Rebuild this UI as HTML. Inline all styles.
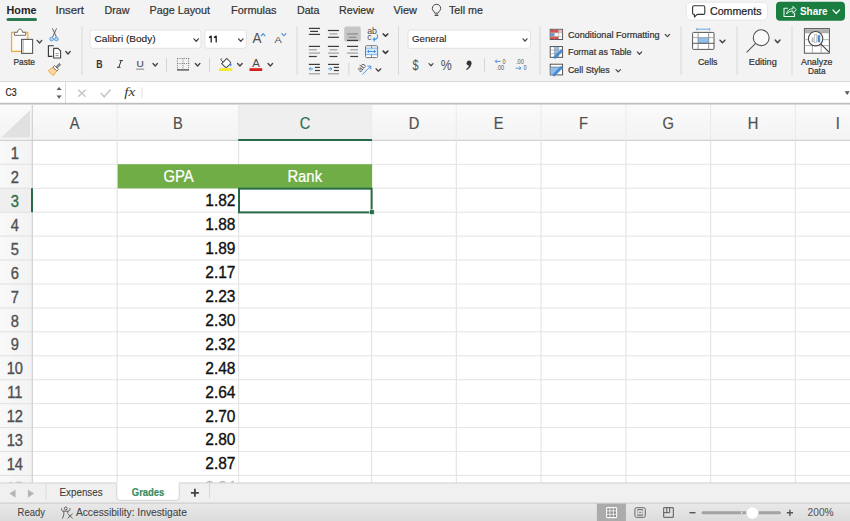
<!DOCTYPE html><html><head><meta charset="utf-8"><style>*{margin:0;padding:0}html,body{width:850px;height:521px;overflow:hidden;background:#fff}svg{display:block}</style></head><body>
<svg width="850" height="521" viewBox="0 0 850 521" font-family='"Liberation Sans",sans-serif'>
<rect x="0" y="0" width="850" height="82" fill="#f3f3f3" />
<rect x="0" y="81" width="850" height="1" fill="#dadada" />
<text x="6.5" y="14" font-size="11" fill="#1f1f1f" font-weight="bold" text-anchor="start" textLength="30" lengthAdjust="spacingAndGlyphs" >Home</text>
<text x="55.5" y="14" font-size="11" fill="#333" font-weight="normal" text-anchor="start" textLength="28.5" lengthAdjust="spacingAndGlyphs" stroke="#333" stroke-width="0.22" >Insert</text>
<text x="104.5" y="14" font-size="11" fill="#333" font-weight="normal" text-anchor="start" textLength="25" lengthAdjust="spacingAndGlyphs" stroke="#333" stroke-width="0.22" >Draw</text>
<text x="149.5" y="14" font-size="11" fill="#333" font-weight="normal" text-anchor="start" textLength="60.5" lengthAdjust="spacingAndGlyphs" stroke="#333" stroke-width="0.22" >Page Layout</text>
<text x="231" y="14" font-size="11" fill="#333" font-weight="normal" text-anchor="start" textLength="45.5" lengthAdjust="spacingAndGlyphs" stroke="#333" stroke-width="0.22" >Formulas</text>
<text x="297" y="14" font-size="11" fill="#333" font-weight="normal" text-anchor="start" textLength="22.5" lengthAdjust="spacingAndGlyphs" stroke="#333" stroke-width="0.22" >Data</text>
<text x="339" y="14" font-size="11" fill="#333" font-weight="normal" text-anchor="start" textLength="35" lengthAdjust="spacingAndGlyphs" stroke="#333" stroke-width="0.22" >Review</text>
<text x="393.5" y="14" font-size="11" fill="#333" font-weight="normal" text-anchor="start" textLength="23.5" lengthAdjust="spacingAndGlyphs" stroke="#333" stroke-width="0.22" >View</text>
<text x="449" y="14" font-size="11" fill="#333" font-weight="normal" text-anchor="start" textLength="34" lengthAdjust="spacingAndGlyphs" stroke="#333" stroke-width="0.22" >Tell me</text>
<rect x="6.5" y="18" width="30.5" height="3" rx="1.5" fill="#2c7a53"/>
<path d="M434.9 13.2c-.3-1.6-2.6-2.6-2.6-4.7a4.2 4.2 0 0 1 8.4 0c0 2.1-2.3 3.1-2.6 4.7z" stroke="#4a4a4a" stroke-width="1.0" fill="none" stroke-linejoin="round"/>
<path d="M435.2 15.3h2.6" stroke="#4a4a4a" stroke-width="1.4" fill="none" stroke-linecap="round"/>
<rect x="686.3" y="2.3" width="81.2" height="17.8" rx="4.5" fill="#fff" stroke="#e2e2e2" stroke-width="0.8"/>
<path d="M694 5.8h9.4a1.4 1.4 0 0 1 1.4 1.4v5.8a1.4 1.4 0 0 1-1.4 1.4h-6.2l-2.8 2.6v-2.6h-.4a1.4 1.4 0 0 1-1.4-1.4v-5.8a1.4 1.4 0 0 1 1.4-1.4z" stroke="#333" stroke-width="1.1" fill="none" stroke-linejoin="round"/>
<text x="710" y="15.2" font-size="10.5" fill="#222" font-weight="normal" text-anchor="start" textLength="51.5" lengthAdjust="spacingAndGlyphs" stroke="#222" stroke-width="0.22" >Comments</text>
<rect x="776" y="1.8" width="69" height="19" rx="4" fill="#1b7e41"/>
<path d="M788 8.2h-4v8.3h10.5v-3.5" stroke="#e8f5ec" stroke-width="1.1" fill="none" stroke-linejoin="round"/>
<path d="M786.5 14c.5-3.5 3-5.3 6.5-5.3v-2.4l3.3 3.5-3.3 3.5v-2.3c-2.8 0-5 .9-6.5 3z" stroke="#e8f5ec" stroke-width="1.0" fill="none" stroke-linejoin="round"/>
<text x="800" y="15" font-size="10.5" fill="#fff" font-weight="bold" text-anchor="start" textLength="27.5" lengthAdjust="spacingAndGlyphs" >Share</text>
<path d="M833.00 10.00L836.25 13.50L839.50 10.00" stroke="#e8f5ec" stroke-width="1.32" fill="none" stroke-linecap="round" stroke-linejoin="round"/>
<rect x="11.5" y="32.3" width="16.3" height="19.2" fill="#fdeccf" stroke="#f2a640" stroke-width="1.1"/>
<rect x="13.2" y="34.2" width="13" height="15.6" fill="#fbfbfb"/>
<path d="M14.4 35.3v-3h3.2c0-2 1-3.2 2.4-3.2s2.4 1.2 2.4 3.2h3.2v3z" stroke="#707070" stroke-width="1.0" fill="#fff" stroke-linejoin="round"/>
<rect x="21.6" y="39.4" width="11" height="14" fill="#fff" stroke="#5a5a5a" stroke-width="1.1"/>
<rect x="22.2" y="40" width="1.8" height="12.8" fill="#c8c8c8"/>
<path d="M37.20 40.35L39.50 42.95L41.80 40.35" stroke="#444" stroke-width="1.32" fill="none" stroke-linecap="round" stroke-linejoin="round"/>
<text x="13.5" y="65" font-size="9" fill="#333" font-weight="normal" text-anchor="start" textLength="21.5" lengthAdjust="spacingAndGlyphs" stroke="#333" stroke-width="0.22" >Paste</text>
<path d="M52.4 28.4l4 8.6M56.6 28.4l-4 8.6" stroke="#555" stroke-width="0.9" fill="none" />
<circle cx="51.6" cy="39.1" r="1.8" fill="#b9d6f2" stroke="#5d9fdc" stroke-width="1.0"/>
<circle cx="56.4" cy="39.1" r="1.8" fill="#b9d6f2" stroke="#5d9fdc" stroke-width="1.0"/>
<path d="M53.8 45.8h-5.4v10.6h4" stroke="#333" stroke-width="1.1" fill="none" />
<path d="M53.6 48.4h4.4l2.6 2.6v7h-7z" stroke="#444" stroke-width="1.1" fill="#fff" stroke-linejoin="round"/>
<path d="M55.6 53.6h3M55.6 55.6h3" stroke="#777" stroke-width="0.8" fill="none" />
<path d="M65.80 51.55L68.00 53.95L70.20 51.55" stroke="#444" stroke-width="1.32" fill="none" stroke-linecap="round" stroke-linejoin="round"/>
<g transform="translate(55.6,68.4) rotate(45) scale(0.82)"><path d="M-3.2 1.2h6.4l1.2 6.8c-2.5 1-6.3 1-8.8 0z" fill="#fbd6a0" stroke="#f0a43a" stroke-width="1" stroke-linejoin="round"/><rect x="-3.4" y="-1.6" width="6.8" height="2.8" fill="#fff" stroke="#555" stroke-width="0.9"/><rect x="-1.1" y="-7.6" width="2.2" height="6" fill="#999" stroke="#555" stroke-width="0.8"/></g>
<rect x="81.5" y="26" width="1" height="49" fill="#dadada" />
<rect x="90" y="30" width="111" height="18.3" rx="2.5" fill="#fff" stroke="#dcdcdc" stroke-width="0.8"/>
<text x="94.6" y="42.4" font-size="9.5" fill="#1a1a1a" font-weight="normal" text-anchor="start" textLength="61" lengthAdjust="spacingAndGlyphs" stroke="#1a1a1a" stroke-width="0.1">Calibri (Body)</text>
<path d="M194.00 38.85L196.20 41.35L198.40 38.85" stroke="#444" stroke-width="1.32" fill="none" stroke-linecap="round" stroke-linejoin="round"/>
<rect x="204.8" y="30" width="41.5" height="18.3" rx="2.5" fill="#fff" stroke="#dcdcdc" stroke-width="0.8"/>
<path d="M211.2 42.6v-6.5l-2.2 1.5M216.2 42.6v-6.5l-2.2 1.5" stroke="#222" stroke-width="1.3" fill="none" stroke-linejoin="round"/>
<path d="M238.60 38.85L240.80 41.35L243.00 38.85" stroke="#444" stroke-width="1.32" fill="none" stroke-linecap="round" stroke-linejoin="round"/>
<text x="252.4" y="43.2" font-size="14" fill="#505050" font-weight="normal" text-anchor="start" textLength="9" lengthAdjust="spacingAndGlyphs" stroke="none">A</text>
<path d="M261.20 35.80L263.10 33.60L265.00 35.80" stroke="#3f8bd6" stroke-width="1.08" fill="none" stroke-linecap="round" stroke-linejoin="round"/>
<text x="274.6" y="42.9" font-size="9.8" fill="#505050" font-weight="normal" text-anchor="start" textLength="7.2" lengthAdjust="spacingAndGlyphs" stroke="none">A</text>
<path d="M281.80 33.55L283.80 35.75L285.80 33.55" stroke="#3f8bd6" stroke-width="1.08" fill="none" stroke-linecap="round" stroke-linejoin="round"/>
<rect x="296.5" y="26" width="1" height="49" fill="#dadada" />
<text x="96.3" y="67.6" font-size="10" fill="#333" font-weight="bold" text-anchor="start" textLength="6.3" lengthAdjust="spacingAndGlyphs" >B</text>
<path d="M119.5 60.6h3.4M117.1 67.3h3.4M121.2 60.6l-2.4 6.7" stroke="#333" stroke-width="1.0" fill="none" />
<text x="136.6" y="66.6" font-size="9.5" fill="#555" font-weight="normal" text-anchor="start" textLength="7.3" lengthAdjust="spacingAndGlyphs" stroke="#555" stroke-width="0.22" >U</text>
<rect x="136.2" y="68.6" width="8" height="1.1" fill="#8a8a8a" />
<path d="M153.00 63.55L155.20 66.05L157.40 63.55" stroke="#444" stroke-width="1.32" fill="none" stroke-linecap="round" stroke-linejoin="round"/>
<rect x="166" y="58" width="1" height="13.5" fill="#d4d4d4" />
<rect x="176.95000000000002" y="58.4" width="0.9" height="1.1" fill="#777" />
<rect x="176.95000000000002" y="60.6" width="0.9" height="1.1" fill="#777" />
<rect x="176.95000000000002" y="62.8" width="0.9" height="1.1" fill="#777" />
<rect x="176.95000000000002" y="65.0" width="0.9" height="1.1" fill="#777" />
<rect x="176.95000000000002" y="67.2" width="0.9" height="1.1" fill="#777" />
<rect x="182.55" y="58.4" width="0.9" height="1.1" fill="#777" />
<rect x="182.55" y="60.6" width="0.9" height="1.1" fill="#777" />
<rect x="182.55" y="62.8" width="0.9" height="1.1" fill="#777" />
<rect x="182.55" y="65.0" width="0.9" height="1.1" fill="#777" />
<rect x="182.55" y="67.2" width="0.9" height="1.1" fill="#777" />
<rect x="188.15" y="58.4" width="0.9" height="1.1" fill="#777" />
<rect x="188.15" y="60.6" width="0.9" height="1.1" fill="#777" />
<rect x="188.15" y="62.8" width="0.9" height="1.1" fill="#777" />
<rect x="188.15" y="65.0" width="0.9" height="1.1" fill="#777" />
<rect x="188.15" y="67.2" width="0.9" height="1.1" fill="#777" />
<rect x="177.2" y="57.949999999999996" width="1.1" height="0.9" fill="#777" />
<rect x="179.39999999999998" y="57.949999999999996" width="1.1" height="0.9" fill="#777" />
<rect x="181.6" y="57.949999999999996" width="1.1" height="0.9" fill="#777" />
<rect x="183.79999999999998" y="57.949999999999996" width="1.1" height="0.9" fill="#777" />
<rect x="186.0" y="57.949999999999996" width="1.1" height="0.9" fill="#777" />
<rect x="188.2" y="57.949999999999996" width="1.1" height="0.9" fill="#777" />
<rect x="177.2" y="63.15" width="1.1" height="0.9" fill="#777" />
<rect x="179.39999999999998" y="63.15" width="1.1" height="0.9" fill="#777" />
<rect x="181.6" y="63.15" width="1.1" height="0.9" fill="#777" />
<rect x="183.79999999999998" y="63.15" width="1.1" height="0.9" fill="#777" />
<rect x="186.0" y="63.15" width="1.1" height="0.9" fill="#777" />
<rect x="188.2" y="63.15" width="1.1" height="0.9" fill="#777" />
<rect x="177" y="69.2" width="12" height="1.4" fill="#555" />
<path d="M195.30 63.55L197.60 66.05L199.90 63.55" stroke="#444" stroke-width="1.32" fill="none" stroke-linecap="round" stroke-linejoin="round"/>
<rect x="209" y="58" width="1" height="13.5" fill="#d4d4d4" />
<g transform="translate(225.8,62.6) rotate(-45)"><path d="M-3.6 -2.2h7.2v4.6c0 1-.6 1.6-1.6 1.6h-4c-1 0-1.6-.6-1.6-1.6z" fill="#fff" stroke="#444" stroke-width="1"/><path d="M-1.6 -2.2v-2.8c0-1 1.5-1.2 1.6-0.2" fill="none" stroke="#444" stroke-width="0.9"/></g>
<path d="M230.6 63.2c.9 1.2 1.1 2.2.1 2.6-.9.3-1.4-.6-.1-2.6z" stroke="#3f8bd6" stroke-width="0.5" fill="#3f8bd6" />
<rect x="219" y="68.2" width="13.2" height="2.8" fill="#f7e92c" />
<path d="M237.60 63.55L239.90 66.05L242.20 63.55" stroke="#444" stroke-width="1.32" fill="none" stroke-linecap="round" stroke-linejoin="round"/>
<text x="252.3" y="66.8" font-size="11" fill="#4a4a4a" font-weight="normal" text-anchor="start" textLength="7.6" lengthAdjust="spacingAndGlyphs" stroke="none">A</text>
<rect x="249.5" y="68.2" width="12.7" height="2.8" fill="#d9201f" />
<path d="M268.00 63.55L270.30 66.05L272.60 63.55" stroke="#444" stroke-width="1.32" fill="none" stroke-linecap="round" stroke-linejoin="round"/>
<rect x="308.9" y="27.799999999999997" width="11.1" height="1.2" fill="#3c3c3c" />
<rect x="310.1" y="30.799999999999997" width="7.9" height="1.2" fill="#3c3c3c" />
<rect x="308.9" y="33.8" width="11.1" height="1.2" fill="#3c3c3c" />
<rect x="327.9" y="29.9" width="11" height="1.2" fill="#3c3c3c" />
<rect x="329.4" y="33.3" width="8.1" height="1.2" fill="#a0a0a0" />
<rect x="327.9" y="36.699999999999996" width="11" height="1.2" fill="#3c3c3c" />
<rect x="344.2" y="26.5" width="16.6" height="15.1" rx="2.2" fill="#c6c6c6"/>
<rect x="347" y="33.3" width="11" height="1.2" fill="#8a8a8a" />
<rect x="348.5" y="36.699999999999996" width="8" height="1.2" fill="#8a8a8a" />
<rect x="347" y="39.8" width="11" height="1.2" fill="#3c3c3c" />
<text x="367.2" y="33.8" font-size="8.4" fill="#4a4a4a" font-weight="normal" text-anchor="start" textLength="9.8" lengthAdjust="spacingAndGlyphs" stroke="none">ab</text>
<text x="367.2" y="39.7" font-size="8.4" fill="#4a4a4a" font-weight="normal" text-anchor="start" textLength="4.4" lengthAdjust="spacingAndGlyphs" stroke="none">c</text>
<path d="M377.2 34.8c.8 1.6.6 4-2.2 4.6h-1.6M374.6 37.9l-1.5 1.5 1.5 1.5" stroke="#4a98dc" stroke-width="1.1" fill="none" stroke-linejoin="round" stroke-linecap="round"/>
<path d="M383.20 33.95L385.50 36.15L387.80 33.95" stroke="#3a3a3a" stroke-width="1.56" fill="none" stroke-linecap="round" stroke-linejoin="round"/>
<rect x="308.9" y="45.8" width="11.1" height="1.2" fill="#3c3c3c" />
<rect x="308.9" y="49.199999999999996" width="7.9" height="1.2" fill="#a0a0a0" />
<rect x="308.9" y="52.5" width="11.1" height="1.2" fill="#a0a0a0" />
<rect x="308.9" y="55.9" width="7.9" height="1.2" fill="#3c3c3c" />
<rect x="327.9" y="45.8" width="11.1" height="1.2" fill="#3c3c3c" />
<rect x="329.5" y="49.199999999999996" width="7.9" height="1.2" fill="#a0a0a0" />
<rect x="327.9" y="52.5" width="11.1" height="1.2" fill="#a0a0a0" />
<rect x="329.5" y="55.9" width="7.9" height="1.2" fill="#3c3c3c" />
<rect x="347" y="45.8" width="11.1" height="1.2" fill="#3c3c3c" />
<rect x="350.2" y="49.199999999999996" width="7.9" height="1.2" fill="#a0a0a0" />
<rect x="347" y="52.5" width="11.1" height="1.2" fill="#a0a0a0" />
<rect x="350.2" y="55.9" width="7.9" height="1.2" fill="#3c3c3c" />
<rect x="365.5" y="45.7" width="12.1" height="11.9" rx="1.2" fill="#fff" stroke="#777" stroke-width="1"/>
<rect x="366" y="48.2" width="11.1" height="6.4" fill="#d3ebfb" />
<path d="M365.5 48.1h12.1M365.5 54.7h12.1" stroke="#5aa0dc" stroke-width="0.8" fill="none" />
<path d="M371.55 45.7v2.4M371.55 54.7v2.9" stroke="#777" stroke-width="0.8" fill="none" />
<path d="M367.6 51.5h7.9M369 50.1l-1.4 1.4 1.4 1.4M374.1 50.1l1.4 1.4-1.4 1.4" stroke="#3f8bd6" stroke-width="0.9" fill="none" />
<path d="M383.20 51.15L385.50 53.35L387.80 51.15" stroke="#3a3a3a" stroke-width="1.56" fill="none" stroke-linecap="round" stroke-linejoin="round"/>
<rect x="308.8" y="63.800000000000004" width="11.1" height="1.2" fill="#3c3c3c" />
<rect x="314.9" y="66.80000000000001" width="5" height="1.2" fill="#3c3c3c" />
<rect x="314.9" y="69.9" width="5" height="1.2" fill="#3c3c3c" />
<rect x="308.8" y="73.2" width="11.1" height="1.2" fill="#a0a0a0" />
<path d="M313 68.9h-3.6M310.9 67.3l-1.6 1.6 1.6 1.6" stroke="#3f8bd6" stroke-width="0.9" fill="none" />
<rect x="328" y="63.800000000000004" width="11" height="1.2" fill="#3c3c3c" />
<rect x="333.9" y="66.80000000000001" width="5" height="1.2" fill="#3c3c3c" />
<rect x="333.9" y="69.9" width="5" height="1.2" fill="#3c3c3c" />
<rect x="328" y="73.2" width="11" height="1.2" fill="#a0a0a0" />
<path d="M328.2 68.9h3.6M330.3 67.3l1.6 1.6-1.6 1.6" stroke="#3f8bd6" stroke-width="0.9" fill="none" />
<rect x="348.4" y="62.7" width="1" height="12.7" fill="#d4d4d4" />
<text x="0" y="0" font-size="7.8" fill="#444" transform="translate(360.6,72.6) rotate(-50)" textLength="9" lengthAdjust="spacingAndGlyphs">ab</text>
<path d="M362.4 74.5l8.3-8.3M367.4 66.1h3.4v3.4" stroke="#3f8bd6" stroke-width="0.9" fill="none" />
<path d="M376.00 68.85L378.40 71.15L380.80 68.85" stroke="#444" stroke-width="1.32" fill="none" stroke-linecap="round" stroke-linejoin="round"/>
<rect x="398" y="26" width="1" height="49" fill="#dadada" />
<rect x="408" y="30" width="122.5" height="18.3" rx="2.5" fill="#fff" stroke="#dcdcdc" stroke-width="0.8"/>
<text x="412" y="42.2" font-size="9.5" fill="#1a1a1a" font-weight="normal" text-anchor="start" textLength="34.5" lengthAdjust="spacingAndGlyphs" stroke="#1a1a1a" stroke-width="0.1">General</text>
<path d="M523.00 38.85L525.00 41.15L527.00 38.85" stroke="#444" stroke-width="1.32" fill="none" stroke-linecap="round" stroke-linejoin="round"/>
<text transform="translate(412.40,69.60) scale(0.78,1.0)" font-size="14" fill="#505050" font-weight="normal" text-anchor="start" >$</text>
<path d="M429.00 63.65L431.00 65.75L433.00 63.65" stroke="#444" stroke-width="1.2" fill="none" stroke-linecap="round" stroke-linejoin="round"/>
<text transform="translate(440.80,69.80) scale(0.9,1.0)" font-size="13.8" fill="#555" font-weight="normal" text-anchor="start" >%</text>
<path d="M467.9 60.9a2.3 2.3 0 0 1 3.5 2.2c0 2.9-1.8 5.3-4.6 6.8l-.5-.8c1.6-1.1 2.6-2.5 2.9-4.2a2.3 2.3 0 0 1-1.3-4z" stroke="#333" stroke-width="0.2" fill="#333" />
<circle cx="468.9" cy="63.2" r="2.3" fill="#333"/>
<rect x="484" y="58" width="1" height="13.5" fill="#d4d4d4" />
<text transform="translate(502.40,64.10) scale(0.72,1.0)" font-size="7.8" fill="#555" font-weight="normal" text-anchor="start" >0</text>
<text transform="translate(496.40,70.40) scale(0.72,1.0)" font-size="7.8" fill="#555" font-weight="normal" text-anchor="start" >.00</text>
<path d="M500.6 61.4h-5.3M496.9 59.7l-1.7 1.7 1.7 1.7" stroke="#3f8bd6" stroke-width="0.9" fill="none" />
<text transform="translate(516.00,64.10) scale(0.72,1.0)" font-size="7.8" fill="#555" font-weight="normal" text-anchor="start" >.00</text>
<text transform="translate(523.60,70.40) scale(0.72,1.0)" font-size="7.8" fill="#555" font-weight="normal" text-anchor="start" >0</text>
<path d="M515.6 68.2h5.3M519.3 66.5l1.7 1.7-1.7 1.7" stroke="#3f8bd6" stroke-width="0.9" fill="none" />
<rect x="539.5" y="26" width="1" height="49" fill="#dadada" />
<rect x="550.2" y="29.3" width="12.4" height="10.2" fill="#fff" stroke="#444" stroke-width="0.9"/>
<rect x="550.6" y="29.8" width="8" height="2.9" fill="#e8474c" />
<rect x="558.8" y="29.8" width="3.4" height="2.9" fill="#f4b6b8" />
<rect x="550.6" y="33.1" width="3.6" height="3.1" fill="#5b9be0" />
<rect x="550.6" y="36.5" width="8" height="2.6" fill="#e8474c" />
<path d="M550.2 32.9h12.4M550.2 36.3h12.4M554.4 29.3v10.2M558.6 29.3v10.2" stroke="#999" stroke-width="0.5" fill="none" />
<text x="568" y="37.9" font-size="9" fill="#333" font-weight="normal" text-anchor="start" textLength="91.5" lengthAdjust="spacingAndGlyphs" stroke="#333" stroke-width="0.22" >Conditional Formatting</text>
<path d="M665.20 34.35L667.40 36.65L669.60 34.35" stroke="#444" stroke-width="1.2" fill="none" stroke-linecap="round" stroke-linejoin="round"/>
<rect x="550.2" y="46.6" width="12.4" height="10.7" fill="#fff" stroke="#444" stroke-width="0.9"/>
<rect x="554.4" y="47" width="4.2" height="10" fill="#8ec0ef" />
<path d="M550.2 50h12.4M550.2 53.6h12.4M554.4 46.6v10.7M558.6 46.6v10.7" stroke="#888" stroke-width="0.5" fill="none" />
<path d="M553.6 57.2l7.6-7.6 1.5 1.5-7.6 7.6z" stroke="#2f6fb8" stroke-width="0.6" fill="#4b8ed8" />
<text x="568" y="55.2" font-size="9" fill="#333" font-weight="normal" text-anchor="start" textLength="63.5" lengthAdjust="spacingAndGlyphs" stroke="#333" stroke-width="0.22" >Format as Table</text>
<path d="M637.30 51.95L639.50 54.25L641.70 51.95" stroke="#444" stroke-width="1.2" fill="none" stroke-linecap="round" stroke-linejoin="round"/>
<rect x="550.2" y="64.2" width="12.4" height="10.7" fill="#fff" stroke="#444" stroke-width="0.9"/>
<path d="M550.6 67h11.6v1.5l-6 6h-5.6z" stroke="none" stroke-width="0" fill="#8ec0ef" />
<path d="M550.2 67h12.4" stroke="#666" stroke-width="0.6" fill="none" />
<path d="M552.6 74.8l8.4-8.4 1.5 1.5-8.4 8.4z" stroke="#2f6fb8" stroke-width="0.6" fill="#4b8ed8" />
<text x="568" y="73.1" font-size="9" fill="#333" font-weight="normal" text-anchor="start" textLength="41.7" lengthAdjust="spacingAndGlyphs" stroke="#333" stroke-width="0.22" >Cell Styles</text>
<path d="M616.00 69.65L618.20 71.95L620.40 69.65" stroke="#444" stroke-width="1.2" fill="none" stroke-linecap="round" stroke-linejoin="round"/>
<rect x="680.5" y="26" width="1" height="49" fill="#dadada" />
<path d="M696.8 29.2h12.8M696.8 28v2.4M709.6 28v2.4" stroke="#5aa0dc" stroke-width="0.9" fill="none" />
<rect x="692.6" y="32.4" width="21.4" height="17" rx="1" fill="#fff" stroke="#555" stroke-width="1"/>
<rect x="698.1" y="37.6" width="10.6" height="5.7" fill="#8cc0f0" />
<path d="M692.6 37.6h21.4" stroke="#999" stroke-width="0.8" fill="none" />
<path d="M692.6 43.3h21.4" stroke="#444" stroke-width="0.9" fill="none" />
<path d="M698.1 32.4v17M708.7 32.4v17" stroke="#888" stroke-width="0.9" fill="none" />
<path d="M720.00 40.15L722.45 42.85L724.90 40.15" stroke="#444" stroke-width="1.44" fill="none" stroke-linecap="round" stroke-linejoin="round"/>
<text x="698" y="65" font-size="9.3" fill="#333" font-weight="normal" text-anchor="start" textLength="19.5" lengthAdjust="spacingAndGlyphs" stroke="#333" stroke-width="0.22" >Cells</text>
<rect x="736.5" y="26" width="1" height="49" fill="#dadada" />
<circle cx="761.2" cy="37.7" r="7.9" fill="#f9f9f9" stroke="#555" stroke-width="1.1"/>
<path d="M755.4 43.6l-8.8 8.8" stroke="#555" stroke-width="1.1" fill="none" />
<path d="M775.20 39.95L777.60 42.75L780.00 39.95" stroke="#444" stroke-width="1.44" fill="none" stroke-linecap="round" stroke-linejoin="round"/>
<text x="748.8" y="65" font-size="9.3" fill="#333" font-weight="normal" text-anchor="start" textLength="28" lengthAdjust="spacingAndGlyphs" stroke="#333" stroke-width="0.22" >Editing</text>
<rect x="791.5" y="26" width="1" height="49" fill="#dadada" />
<rect x="804.4" y="28.6" width="25" height="24.6" fill="#fff" stroke="#555" stroke-width="1"/>
<rect x="804.9" y="29.1" width="24" height="3.6" fill="#b0b0b0" />
<path d="M804.4 32.8h25M804.4 39.7h25M804.4 45.6h25M812.4 32.8v20.4M821.2 32.8v20.4" stroke="#999" stroke-width="0.8" fill="none" />
<circle cx="815.6" cy="38.7" r="7.2" fill="#fff" stroke="#444" stroke-width="1.1"/>
<path d="M820.8 43.9l8.2 8.2" stroke="#444" stroke-width="1.2" fill="none" />
<rect x="811.6" y="37.4" width="2" height="4.8" fill="#bbb" />
<rect x="814.6" y="34.4" width="2.2" height="7.8" fill="#fff" stroke="#999" stroke-width="0.5"/>
<rect x="817.6" y="35.2" width="2.6" height="7" fill="#4b8ed8" />
<text x="801" y="65" font-size="9.3" fill="#333" font-weight="normal" text-anchor="start" textLength="31.5" lengthAdjust="spacingAndGlyphs" stroke="#333" stroke-width="0.22" >Analyze</text>
<text x="808" y="74" font-size="9.3" fill="#333" font-weight="normal" text-anchor="start" textLength="17.5" lengthAdjust="spacingAndGlyphs" stroke="#333" stroke-width="0.22" >Data</text>
<rect x="0" y="82" width="850" height="22" fill="#fff" />
<rect x="0" y="103" width="850" height="1" fill="#d0d0d0" />
<rect x="65" y="82" width="1" height="21" fill="#dcdcdc" />
<text x="5.5" y="95.8" font-size="10" fill="#222" font-weight="normal" text-anchor="start" textLength="11.2" lengthAdjust="spacingAndGlyphs" stroke="#222" stroke-width="0.2">C3</text>
<path d="M56.6 90.1l2.45-3.1 2.45 3.1z" stroke="#555" stroke-width="0.1" fill="#606060" />
<path d="M56.6 95.4h4.9l-2.45 3.4z" stroke="#555" stroke-width="0.1" fill="#606060" />
<path d="M78.2 89.8l7.4 7M85.6 89.8l-7.4 7" stroke="#c6c6c6" stroke-width="1.5" fill="none" />
<path d="M100.8 93l3.4 3.8 6.4-7.2" stroke="#c6c6c6" stroke-width="1.5" fill="none" />
<text x="124.3" y="96.2" font-size="12.5" fill="#3a3a3a" font-weight="normal" text-anchor="start" textLength="11" lengthAdjust="spacingAndGlyphs" stroke="none" font-style="italic" font-family="Liberation Serif">fx</text>
<rect x="141.5" y="87.5" width="1" height="10.5" fill="#e0e0e0" />
<path d="M844.8 91.3h4.8l-2.4 3.6z" stroke="#555" stroke-width="0.1" fill="#5a5a5a" />
<rect x="0" y="104" width="850" height="379" fill="#fff" />
<defs><linearGradient id="hg" x1="0" y1="0" x2="0" y2="1"><stop offset="0" stop-color="#fbfbfb"/><stop offset="1" stop-color="#f3f3f3"/></linearGradient><linearGradient id="rg" x1="0" y1="0" x2="1" y2="0"><stop offset="0" stop-color="#f9f9f9"/><stop offset="1" stop-color="#f3f3f3"/></linearGradient></defs>
<rect x="0" y="104.5" width="850" height="36" fill="url(#hg)" />
<rect x="0" y="140" width="32.3" height="343" fill="url(#rg)" />
<rect x="238.6" y="104.5" width="133.00000000000003" height="36" fill="#efefef" />
<rect x="0" y="188.26" width="32.3" height="23.930000000000007" fill="#efefef" />
<polygon points="1.3,137.6 30.2,137.6 30.2,109.9" fill="#e1e1e1"/>
<rect x="0" y="102.8" width="850" height="1.2" fill="#bdbdbd" />
<rect x="0" y="104" width="850" height="1" fill="#dadada" />
<rect x="32.3" y="163.78" width="850" height="1.1" fill="#e6e6e6" />
<rect x="0" y="163.78" width="32.3" height="1.1" fill="#e2e2e2" />
<rect x="32.3" y="187.70999999999998" width="850" height="1.1" fill="#e6e6e6" />
<rect x="0" y="187.70999999999998" width="32.3" height="1.1" fill="#e2e2e2" />
<rect x="32.3" y="211.64" width="850" height="1.1" fill="#e6e6e6" />
<rect x="0" y="211.64" width="32.3" height="1.1" fill="#e2e2e2" />
<rect x="32.3" y="235.57" width="850" height="1.1" fill="#e6e6e6" />
<rect x="0" y="235.57" width="32.3" height="1.1" fill="#e2e2e2" />
<rect x="32.3" y="259.5" width="850" height="1.1" fill="#e6e6e6" />
<rect x="0" y="259.5" width="32.3" height="1.1" fill="#e2e2e2" />
<rect x="32.3" y="283.43" width="850" height="1.1" fill="#e6e6e6" />
<rect x="0" y="283.43" width="32.3" height="1.1" fill="#e2e2e2" />
<rect x="32.3" y="307.35999999999996" width="850" height="1.1" fill="#e6e6e6" />
<rect x="0" y="307.35999999999996" width="32.3" height="1.1" fill="#e2e2e2" />
<rect x="32.3" y="331.29" width="850" height="1.1" fill="#e6e6e6" />
<rect x="0" y="331.29" width="32.3" height="1.1" fill="#e2e2e2" />
<rect x="32.3" y="355.21999999999997" width="850" height="1.1" fill="#e6e6e6" />
<rect x="0" y="355.21999999999997" width="32.3" height="1.1" fill="#e2e2e2" />
<rect x="32.3" y="379.15000000000003" width="850" height="1.1" fill="#e6e6e6" />
<rect x="0" y="379.15000000000003" width="32.3" height="1.1" fill="#e2e2e2" />
<rect x="32.3" y="403.08" width="850" height="1.1" fill="#e6e6e6" />
<rect x="0" y="403.08" width="32.3" height="1.1" fill="#e2e2e2" />
<rect x="32.3" y="427.00999999999993" width="850" height="1.1" fill="#e6e6e6" />
<rect x="0" y="427.00999999999993" width="32.3" height="1.1" fill="#e2e2e2" />
<rect x="32.3" y="450.94" width="850" height="1.1" fill="#e6e6e6" />
<rect x="0" y="450.94" width="32.3" height="1.1" fill="#e2e2e2" />
<rect x="32.3" y="474.86999999999995" width="850" height="1.1" fill="#e6e6e6" />
<rect x="0" y="474.86999999999995" width="32.3" height="1.1" fill="#e2e2e2" />
<rect x="32.3" y="498.8" width="850" height="1.1" fill="#e6e6e6" />
<rect x="0" y="498.8" width="32.3" height="1.1" fill="#e2e2e2" />
<rect x="0" y="139.8" width="850" height="1.2" fill="#d2d2d2" />
<rect x="116.65" y="105" width="1.1" height="35.400000000000006" fill="#ebebeb" />
<rect x="116.65" y="140.4" width="1.1" height="342.6" fill="#e3e3e3" />
<text transform="translate(74.75,129.00) scale(0.9,1.0)" font-size="16.3" fill="#505050" font-weight="normal" text-anchor="middle" stroke="#505050" stroke-width="0.2">A</text>
<rect x="238.04999999999998" y="105" width="1.1" height="35.400000000000006" fill="#ebebeb" />
<rect x="238.04999999999998" y="140.4" width="1.1" height="342.6" fill="#e3e3e3" />
<text transform="translate(177.90,129.00) scale(0.9,1.0)" font-size="16.3" fill="#505050" font-weight="normal" text-anchor="middle" stroke="#505050" stroke-width="0.2">B</text>
<rect x="371.05" y="105" width="1.1" height="35.400000000000006" fill="#ebebeb" />
<rect x="371.05" y="140.4" width="1.1" height="342.6" fill="#e3e3e3" />
<text transform="translate(305.10,129.00) scale(0.9,1.0)" font-size="16.3" fill="#2d7050" font-weight="normal" text-anchor="middle" stroke="#2d7050" stroke-width="0.2">C</text>
<rect x="455.75" y="105" width="1.1" height="35.400000000000006" fill="#ebebeb" />
<rect x="455.75" y="140.4" width="1.1" height="342.6" fill="#e3e3e3" />
<text transform="translate(413.95,129.00) scale(0.9,1.0)" font-size="16.3" fill="#505050" font-weight="normal" text-anchor="middle" stroke="#505050" stroke-width="0.2">D</text>
<rect x="540.5500000000001" y="105" width="1.1" height="35.400000000000006" fill="#ebebeb" />
<rect x="540.5500000000001" y="140.4" width="1.1" height="342.6" fill="#e3e3e3" />
<text transform="translate(498.70,129.00) scale(0.9,1.0)" font-size="16.3" fill="#505050" font-weight="normal" text-anchor="middle" stroke="#505050" stroke-width="0.2">E</text>
<rect x="625.35" y="105" width="1.1" height="35.400000000000006" fill="#ebebeb" />
<rect x="625.35" y="140.4" width="1.1" height="342.6" fill="#e3e3e3" />
<text transform="translate(583.50,129.00) scale(0.9,1.0)" font-size="16.3" fill="#505050" font-weight="normal" text-anchor="middle" stroke="#505050" stroke-width="0.2">F</text>
<rect x="710.0500000000001" y="105" width="1.1" height="35.400000000000006" fill="#ebebeb" />
<rect x="710.0500000000001" y="140.4" width="1.1" height="342.6" fill="#e3e3e3" />
<text transform="translate(668.25,129.00) scale(0.9,1.0)" font-size="16.3" fill="#505050" font-weight="normal" text-anchor="middle" stroke="#505050" stroke-width="0.2">G</text>
<rect x="794.85" y="105" width="1.1" height="35.400000000000006" fill="#ebebeb" />
<rect x="794.85" y="140.4" width="1.1" height="342.6" fill="#e3e3e3" />
<text transform="translate(753.00,129.00) scale(0.9,1.0)" font-size="16.3" fill="#505050" font-weight="normal" text-anchor="middle" stroke="#505050" stroke-width="0.2">H</text>
<rect x="879.6500000000001" y="105" width="1.1" height="35.400000000000006" fill="#ebebeb" />
<rect x="879.6500000000001" y="140.4" width="1.1" height="342.6" fill="#e3e3e3" />
<text transform="translate(837.80,129.00) scale(0.9,1.0)" font-size="16.3" fill="#505050" font-weight="normal" text-anchor="middle" stroke="#505050" stroke-width="0.2">I</text>
<rect x="31.699999999999996" y="105" width="1.2" height="378" fill="#d0d0d0" />
<rect x="117.7" y="164.23000000000002" width="254.40000000000003" height="24.129999999999978" fill="#70ad47" />
<text transform="translate(163.40,182.30) scale(0.9,1.0)" font-size="16.5" fill="#fff" font-weight="normal" text-anchor="start" stroke="#fff" stroke-width="0.25">GPA</text>
<text transform="translate(287.40,182.30) scale(0.9,1.0)" font-size="16.5" fill="#fff" font-weight="normal" text-anchor="start" stroke="#fff" stroke-width="0.25">Rank</text>
<text transform="translate(14.80,159.00) scale(0.9,1.0)" font-size="16.3" fill="#505050" font-weight="normal" text-anchor="middle" stroke="#505050" stroke-width="0.35">1</text>
<text transform="translate(14.80,182.93) scale(0.9,1.0)" font-size="16.3" fill="#505050" font-weight="normal" text-anchor="middle" stroke="#505050" stroke-width="0.35">2</text>
<text transform="translate(14.80,206.86) scale(0.9,1.0)" font-size="16.3" fill="#2a6d4b" font-weight="normal" text-anchor="middle" stroke="#2a6d4b" stroke-width="0.35">3</text>
<text transform="translate(14.80,230.79) scale(0.9,1.0)" font-size="16.3" fill="#505050" font-weight="normal" text-anchor="middle" stroke="#505050" stroke-width="0.35">4</text>
<text transform="translate(14.80,254.72) scale(0.9,1.0)" font-size="16.3" fill="#505050" font-weight="normal" text-anchor="middle" stroke="#505050" stroke-width="0.35">5</text>
<text transform="translate(14.80,278.65) scale(0.9,1.0)" font-size="16.3" fill="#505050" font-weight="normal" text-anchor="middle" stroke="#505050" stroke-width="0.35">6</text>
<text transform="translate(14.80,302.58) scale(0.9,1.0)" font-size="16.3" fill="#505050" font-weight="normal" text-anchor="middle" stroke="#505050" stroke-width="0.35">7</text>
<text transform="translate(14.80,326.51) scale(0.9,1.0)" font-size="16.3" fill="#505050" font-weight="normal" text-anchor="middle" stroke="#505050" stroke-width="0.35">8</text>
<text transform="translate(14.80,350.44) scale(0.9,1.0)" font-size="16.3" fill="#505050" font-weight="normal" text-anchor="middle" stroke="#505050" stroke-width="0.35">9</text>
<text transform="translate(14.80,374.37) scale(0.9,1.0)" font-size="16.3" fill="#505050" font-weight="normal" text-anchor="middle" stroke="#505050" stroke-width="0.35">10</text>
<text transform="translate(14.80,398.30) scale(0.9,1.0)" font-size="16.3" fill="#505050" font-weight="normal" text-anchor="middle" stroke="#505050" stroke-width="0.35">11</text>
<text transform="translate(14.80,422.23) scale(0.9,1.0)" font-size="16.3" fill="#505050" font-weight="normal" text-anchor="middle" stroke="#505050" stroke-width="0.35">12</text>
<text transform="translate(14.80,446.16) scale(0.9,1.0)" font-size="16.3" fill="#505050" font-weight="normal" text-anchor="middle" stroke="#505050" stroke-width="0.35">13</text>
<text transform="translate(14.80,470.09) scale(0.9,1.0)" font-size="16.3" fill="#505050" font-weight="normal" text-anchor="middle" stroke="#505050" stroke-width="0.35">14</text>
<text transform="translate(14.80,494.02) scale(0.9,1.0)" font-size="16.3" fill="#bbb" font-weight="normal" text-anchor="middle" stroke="#bbb" stroke-width="0.35">15</text>
<text transform="translate(235.40,206.16) scale(0.98,1.0)" font-size="15.8" fill="#111" font-weight="normal" text-anchor="end" stroke="#111" stroke-width="0.35">1.82</text>
<text transform="translate(235.40,230.09) scale(0.98,1.0)" font-size="15.8" fill="#111" font-weight="normal" text-anchor="end" stroke="#111" stroke-width="0.35">1.88</text>
<text transform="translate(235.40,254.02) scale(0.98,1.0)" font-size="15.8" fill="#111" font-weight="normal" text-anchor="end" stroke="#111" stroke-width="0.35">1.89</text>
<text transform="translate(235.40,277.95) scale(0.98,1.0)" font-size="15.8" fill="#111" font-weight="normal" text-anchor="end" stroke="#111" stroke-width="0.35">2.17</text>
<text transform="translate(235.40,301.88) scale(0.98,1.0)" font-size="15.8" fill="#111" font-weight="normal" text-anchor="end" stroke="#111" stroke-width="0.35">2.23</text>
<text transform="translate(235.40,325.81) scale(0.98,1.0)" font-size="15.8" fill="#111" font-weight="normal" text-anchor="end" stroke="#111" stroke-width="0.35">2.30</text>
<text transform="translate(235.40,349.74) scale(0.98,1.0)" font-size="15.8" fill="#111" font-weight="normal" text-anchor="end" stroke="#111" stroke-width="0.35">2.32</text>
<text transform="translate(235.40,373.67) scale(0.98,1.0)" font-size="15.8" fill="#111" font-weight="normal" text-anchor="end" stroke="#111" stroke-width="0.35">2.48</text>
<text transform="translate(235.40,397.60) scale(0.98,1.0)" font-size="15.8" fill="#111" font-weight="normal" text-anchor="end" stroke="#111" stroke-width="0.35">2.64</text>
<text transform="translate(235.40,421.53) scale(0.98,1.0)" font-size="15.8" fill="#111" font-weight="normal" text-anchor="end" stroke="#111" stroke-width="0.35">2.70</text>
<text transform="translate(235.40,445.46) scale(0.98,1.0)" font-size="15.8" fill="#111" font-weight="normal" text-anchor="end" stroke="#111" stroke-width="0.35">2.80</text>
<text transform="translate(235.40,469.39) scale(0.98,1.0)" font-size="15.8" fill="#111" font-weight="normal" text-anchor="end" stroke="#111" stroke-width="0.35">2.87</text>
<text transform="translate(235.40,493.32) scale(0.98,1.0)" font-size="15.8" fill="#bbb" font-weight="normal" text-anchor="end" stroke="#bbb" stroke-width="0.35">2.94</text>
<rect x="239.00" y="188.66" width="132.60" height="23.73" fill="none" stroke="#266b48" stroke-width="2"/>
<rect x="369.6" y="209.79" width="4.6" height="4.6" fill="#266b48" stroke="#fff" stroke-width="0.6"/>
<rect x="238.2" y="139" width="133.80000000000004" height="2" fill="#266b48" />
<rect x="31" y="188.26" width="2" height="23.930000000000007" fill="#266b48" />
<defs><linearGradient id="sg" x1="0" y1="0" x2="0" y2="1"><stop offset="0" stop-color="#e9e9e9"/><stop offset="1" stop-color="#dcdcdc"/></linearGradient></defs>
<rect x="0" y="483" width="850" height="20" fill="#f0f0f0" />
<rect x="0" y="482.4" width="850" height="1.2" fill="#d8d8d8" />
<path d="M15.5 489.7v7.7l-6-3.85z" stroke="#aaa" stroke-width="0.1" fill="#b5b5b5" />
<path d="M28 489.7v7.7l6-3.85z" stroke="#aaa" stroke-width="0.1" fill="#b5b5b5" />
<rect x="45.6" y="483" width="1" height="16.5" fill="#dcdcdc" />
<text x="59.6" y="496" font-size="10" fill="#3a3a3a" font-weight="normal" text-anchor="start" textLength="43" lengthAdjust="spacingAndGlyphs" stroke="#3a3a3a" stroke-width="0.08">Expenses</text>
<path d="M116.8 483.6v14a2.8 2.8 0 0 0 2.8 2.8h56.8a2.8 2.8 0 0 0 2.8-2.8v-14" fill="#fff" stroke="#cfcfcf" stroke-width="0.9"/>
<rect x="117.3" y="482" width="61.4" height="2" fill="#fff" />
<text x="131.8" y="495.9" font-size="10.2" fill="#3b8b5c" font-weight="bold" text-anchor="start" textLength="32.5" lengthAdjust="spacingAndGlyphs" stroke="#3b8b5c" stroke-width="0.2">Grades</text>
<path d="M190.9 492.8h8M194.9 488.8v8" stroke="#444" stroke-width="1.8" fill="none" />
<rect x="209" y="483" width="1" height="15.5" fill="#d8d8d8" />
<rect x="0" y="503" width="850" height="18" fill="url(#sg)" />
<rect x="0" y="502.6" width="850" height="1" fill="#c8c8c8" />
<text x="17.6" y="516" font-size="10" fill="#444" font-weight="normal" text-anchor="start" textLength="27.3" lengthAdjust="spacingAndGlyphs" stroke="#444" stroke-width="0.08">Ready</text>
<circle cx="65.8" cy="508.4" r="1.4" fill="none" stroke="#555" stroke-width="0.9"/>
<path d="M61.6 508.6c-.4 1.6.6 2.6 2.2 2.6h4c1.6 0 2.6-1 2.2-2.6M63.8 511.2v3.4l-1.2 3.6M67.8 511.2v1.6" stroke="#555" stroke-width="0.9" fill="none" stroke-linecap="round" stroke-linejoin="round"/>
<path d="M67.6 513.6l5 4.8M72.6 513.6l-5 4.8" stroke="#555" stroke-width="0.9" fill="none" />
<text x="75.9" y="516" font-size="10" fill="#444" font-weight="normal" text-anchor="start" textLength="111" lengthAdjust="spacingAndGlyphs" stroke="#444" stroke-width="0.08">Accessibility: Investigate</text>
<rect x="596.9" y="503.6" width="29" height="17.4" fill="#ababab" />
<rect x="606.6" y="507.6" width="10" height="10" rx="0.8" fill="#8f8f8f" stroke="#fafafa" stroke-width="1.1"/>
<path d="M609.9 507.6v10M613.3 507.6v10M606.6 510.9h10M606.6 514.3h10" stroke="#f2f2f2" stroke-width="0.9" fill="none" />
<rect x="634.9" y="507.7" width="10.4" height="9.6" rx="1.6" fill="none" stroke="#666" stroke-width="1"/>
<path d="M637.3 509.6h5.6M637.3 515.2h5.6" stroke="#777" stroke-width="1.2" fill="none" />
<path d="M637.5 509.6v5.6M642.7 509.6v5.6" stroke="#999" stroke-width="0.6" fill="none" />
<path d="M638.8 512.4h2.6" stroke="#777" stroke-width="0.9" fill="none" />
<path d="M663.7 507.7h9.6v9.6h-9.6zM666.8 507.7v5M669.7 507.7v5M663.7 512.7h6" stroke="#555" stroke-width="1" fill="none" />
<rect x="689.5" y="512" width="6" height="1.4" fill="#555" />
<rect x="701.5" y="511.3" width="79.5" height="3" rx="1.5" fill="#a3a3a3"/>
<rect x="741" y="511.5" width="1.3" height="2.6" fill="#ddd" />
<circle cx="752.4" cy="513" r="6.2" fill="#fff" stroke="#d0d0d0" stroke-width="0.5"/>
<path d="M786.8 512.8h6.2M789.9 509.7v6.2" stroke="#555" stroke-width="1.4" fill="none" />
<text x="807.6" y="516" font-size="10" fill="#555" font-weight="normal" text-anchor="start" textLength="26" lengthAdjust="spacingAndGlyphs" stroke="#555" stroke-width="0.08">200%</text>
</svg>
</body></html>
